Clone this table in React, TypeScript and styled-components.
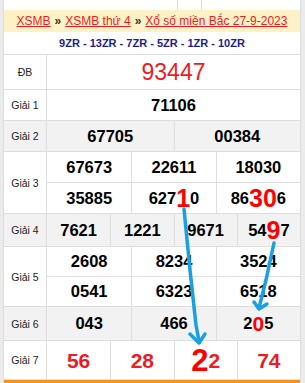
import React from 'react'
import styled, { createGlobalStyle } from 'styled-components'

const GlobalStyle = createGlobalStyle`
  html, body {
    margin: 0;
    padding: 0;
    background: #ebebeb;
  }
  body {
    font-family: 'Liberation Sans', Arial, sans-serif;
  }
`

const Page = styled.div`
  position: relative;
  width: 305px;
  height: 383px;
  overflow: hidden;
  padding-left: 3px;
  box-sizing: border-box;
`

const Board = styled.div`
  width: 298px;
  background: #fff;
  border-left: 1px solid #dcdcdc;
  border-right: 1px solid #dcdcdc;
  box-sizing: border-box;
`

const TopStrip = styled.div`
  display: grid;
  grid-template-columns: 174px 24px 1fr;
  height: 10px;
`

const StripCell = styled.div`
  border-right: 1px solid #dedede;
  &:last-child {
    border-right: none;
  }
`

const Header = styled.div`
  height: 22px;
  background: #fdf2c6;
  display: flex;
  align-items: center;
  justify-content: center;
  font-size: 12px;
  white-space: nowrap;
`

const Crumb = styled.a`
  color: #ec1c24;
  text-decoration: underline;
`

const Sep = styled.span`
  color: #333;
  font-weight: bold;
  margin: 0 4px;
`

const Codes = styled.div`
  height: 23px;
  display: flex;
  align-items: center;
  justify-content: center;
  border-bottom: 1px solid #dedede;
  box-sizing: border-box;
  color: #1c1c94;
  font-size: 11px;
  font-weight: bold;
`

const Row = styled.div<{ $h: number; $alt?: boolean }>`
  display: flex;
  height: ${({ $h }) => $h}px;
  background: ${({ $alt }) => ($alt ? '#f2f2f2' : '#fff')};
  border-bottom: 1px solid #dedede;
  box-sizing: border-box;
`

const Label = styled.div`
  width: 43px;
  flex-shrink: 0;
  display: flex;
  align-items: center;
  justify-content: center;
  border-right: 1px solid #dedede;
  box-sizing: border-box;
  font-size: 10.5px;
  color: #222;
`

const Values = styled.div`
  flex: 1;
  display: flex;
  flex-direction: column;
`

const Line = styled.div<{ $cols: number }>`
  flex: 1;
  display: grid;
  grid-template-columns: repeat(${({ $cols }) => $cols}, 1fr);
  & + & {
    border-top: 1px solid #dedede;
  }
`

const Cell = styled.div<{ $tone?: 'red' | 'jackpot' }>`
  display: flex;
  align-items: center;
  justify-content: center;
  font-weight: ${({ $tone }) => ($tone === 'jackpot' ? 'normal' : 'bold')};
  font-size: ${({ $tone }) => ($tone === 'jackpot' ? 23 : $tone === 'red' ? 21 : 16.5)}px;
  color: ${({ $tone }) => ($tone ? '#ec1c24' : '#000')};
  line-height: 1;
  & + & {
    border-left: 1px solid #dedede;
  }
`

const Hot = styled.span<{ $size: number }>`
  color: #ff0000;
  font-size: ${({ $size }) => $size}px;
  font-weight: bold;
`

const Footer = styled.div`
  height: 3px;
  background: #f7941d;
`

const Overlay = styled.svg`
  position: absolute;
  top: 0;
  left: 0;
  pointer-events: none;
`

type Part = string | { hot: string; size: number }
type Num = Part[]

type Prize = {
  label: string
  h: number
  cols: number
  lines: Num[][]
  tone?: 'red' | 'jackpot'
}

const prizes: Prize[] = [
  { label: 'ĐB', h: 35, cols: 1, tone: 'jackpot', lines: [[['93447']]] },
  { label: 'Giải 1', h: 31, cols: 1, lines: [[['71106']]] },
  { label: 'Giải 2', h: 31, cols: 2, lines: [[['67705'], ['00384']]] },
  {
    label: 'Giải 3',
    h: 62,
    cols: 3,
    lines: [
      [['67673'], ['22611'], ['18030']],
      [['35885'], ['627', { hot: '1', size: 25 }, '0'], ['86', { hot: '30', size: 25 }, '6']],
    ],
  },
  {
    label: 'Giải 4',
    h: 33,
    cols: 4,
    lines: [[['7621'], ['1221'], ['9671'], ['54', { hot: '9', size: 25 }, '7']]],
  },
  {
    label: 'Giải 5',
    h: 60,
    cols: 3,
    lines: [
      [['2608'], ['8234'], ['3524']],
      [['0541'], ['6323'], ['6518']],
    ],
  },
  {
    label: 'Giải 6',
    h: 34,
    cols: 3,
    lines: [[['043'], ['466'], ['2', { hot: '0', size: 21 }, '5']]],
  },
  {
    label: 'Giải 7',
    h: 39,
    cols: 4,
    tone: 'red',
    lines: [[['56'], ['28'], [{ hot: '2', size: 31 }, '2'], ['74']]],
  },
]

const renderNum = (num: Num) =>
  num.map((p, i) =>
    typeof p === 'string' ? (
      <React.Fragment key={i}>{p}</React.Fragment>
    ) : (
      <Hot key={i} $size={p.size}>
        {p.hot}
      </Hot>
    )
  )

const App = () => {
  return (
    <Page>
      <GlobalStyle />
      <Board>
        <TopStrip>
          <StripCell />
          <StripCell />
          <StripCell />
        </TopStrip>
        <Header>
          <Crumb>XSMB</Crumb>
          <Sep>»</Sep>
          <Crumb>XSMB thứ 4</Crumb>
          <Sep>»</Sep>
          <Crumb>Xổ số miền Bắc 27-9-2023</Crumb>
        </Header>
        <Codes>9ZR - 13ZR - 7ZR - 5ZR - 1ZR - 10ZR</Codes>
        {prizes.map((prize, idx) => (
          <Row key={prize.label} $h={prize.h} $alt={idx % 2 === 0 && idx > 0}>
            <Label>{prize.label}</Label>
            <Values>
              {prize.lines.map((line, li) => (
                <Line key={li} $cols={prize.cols}>
                  {line.map((num, ni) => (
                    <Cell key={ni} $tone={prize.tone}>
                      {renderNum(num)}
                    </Cell>
                  ))}
                </Line>
              ))}
            </Values>
          </Row>
        ))}
        <Footer />
      </Board>
      {/* hand-drawn arrows over the table */}
      <Overlay width="305" height="383" viewBox="0 0 305 383">
        <g fill="none" stroke="#1a9fe0" strokeWidth="3.5" strokeLinecap="round" strokeLinejoin="round">
          <polyline points="184,209 190,270 196,325 199,341" />
          <polyline points="190,334 199,343 205,334" />
          <polyline points="274,243 266,280 259,308" />
          <polyline points="254,302 259,309 267,304" />
        </g>
      </Overlay>
    </Page>
  )
}

export default App
